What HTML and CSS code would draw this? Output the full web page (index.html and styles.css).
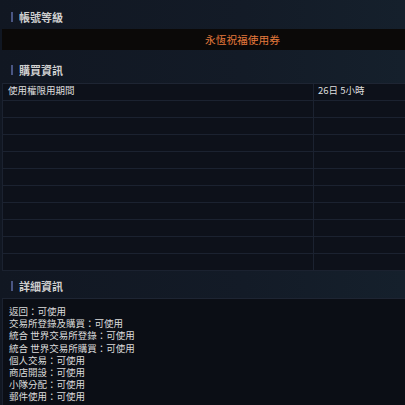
FILE: index.html
```html
<!DOCTYPE html>
<html lang="zh-Hant">
  <head>
    <meta charset="UTF-8" />
    <meta name="viewport" content="width=device-width, initial-scale=1.0" />
    <title>帳號等級</title>
    <link rel="stylesheet" href="styles.css">
  </head>
  <body>
    <div class="page">
      <div class="section-title"><span>帳號等級</span></div>
      <div class="grade-bar">
        <span class="grade-name">永恆祝福使用券</span>
      </div>

      <div class="section-title"><span>購買資訊</span></div>
      <div class="info-table">
        <div class="row">
          <div class="cell label">使用權限用期間</div>
          <div class="cell value">26日 5小時</div>
        </div>
        <div class="row"><div class="cell label"></div><div class="cell value"></div></div>
        <div class="row"><div class="cell label"></div><div class="cell value"></div></div>
        <div class="row"><div class="cell label"></div><div class="cell value"></div></div>
        <div class="row"><div class="cell label"></div><div class="cell value"></div></div>
        <div class="row"><div class="cell label"></div><div class="cell value"></div></div>
        <div class="row"><div class="cell label"></div><div class="cell value"></div></div>
        <div class="row"><div class="cell label"></div><div class="cell value"></div></div>
        <div class="row"><div class="cell label"></div><div class="cell value"></div></div>
        <div class="row"><div class="cell label"></div><div class="cell value"></div></div>
        <div class="row"><div class="cell label"></div><div class="cell value"></div></div>
      </div>

      <div class="section-title"><span>詳細資訊</span></div>
      <div class="detail-box">
        <p>返回：可使用</p>
        <p>交易所登錄及購買：可使用</p>
        <p>統合 世界交易所登錄：可使用</p>
        <p>統合 世界交易所購買：可使用</p>
        <p>個人交易：可使用</p>
        <p>商店開設：可使用</p>
        <p>小隊分配：可使用</p>
        <p>郵件使用：可使用</p>
      </div>
    </div>
  </body>
</html>
```

FILE: styles.css
```css
body {
  margin: 0;
  background: linear-gradient(90deg, #111722 0%, #131b27 60%, #15202c 100%);
  color: #d6d6d6;
  font-family: "Noto Sans CJK TC", "Noto Sans", sans-serif;
  height: 405px;
  overflow: hidden;
}

.page {
  display: flex;
  flex-direction: column;
  padding-top: 5px;
}

.section-title {
  height: 24px;
  display: flex;
  align-items: center;
  padding-left: 11px;
}

.section-title span {
  border-left: 2px solid #4a5683;
  padding-left: 6px;
  font-size: 11px;
  line-height: 10px;
  font-weight: bold;
  color: #cfcfcf;
}

.grade-bar {
  height: 21px;
  margin-left: 2px;
  background: #0b0908;
  display: flex;
  align-items: center;
  padding-left: 203px;
  margin-bottom: 8px;
}

.grade-name {
  color: #e57a3c;
  font-size: 10.7px;
}

.info-table {
  margin: 1px 0 3px 2px;
  background: #0d111a;
  border-left: 1px solid #1b2230;
  border-top: 1px solid #1e2533;
}

.row {
  display: flex;
  height: 16px;
  border-bottom: 1px solid #1b2230;
}

.cell {
  font-size: 9.5px;
  line-height: 13px;
  color: #dedede;
}

.label {
  width: 305px;
  padding-left: 5px;
  border-right: 1px solid #1b2230;
}

.value {
  flex: 1;
  padding-left: 4px;
}

.detail-box {
  margin-left: 2px;
  background: #0b0e15;
  border-left: 1px solid #1b2230;
  border-top: 1px solid #1e2533;
  padding: 6px 6px 0;
  height: 110px;
}

.detail-box p {
  margin: 0;
  height: 12.2px;
  font-size: 9.5px;
  line-height: 12px;
  color: #dcdcdc;
}
```
